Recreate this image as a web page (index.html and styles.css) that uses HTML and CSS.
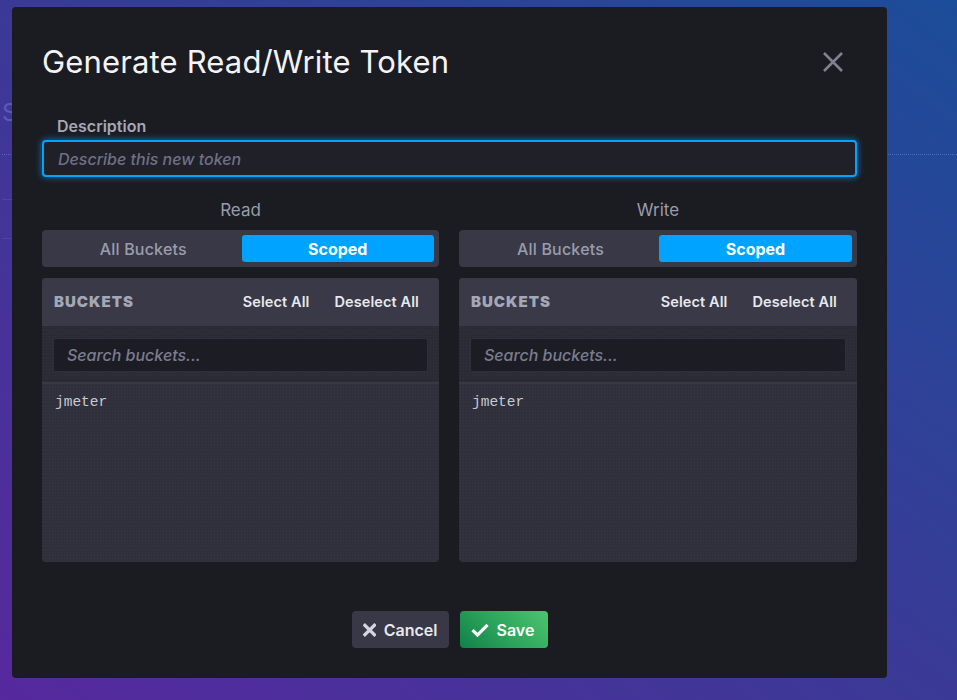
FILE: index.html
```html
<!DOCTYPE html>
<html lang="en">
<head>
<meta charset="utf-8">
<title>Generate Read/Write Token</title>
<link rel="stylesheet" href="styles.css">
</head>
<body>
<div class="page">
  <div class="page-title">S</div>
  <div class="page-rule"></div>
  <div class="page-box"></div>
</div>
<div class="overlay">
  <div class="modal">
    <div class="modal-header">
      <h1 class="modal-title">Generate Read/Write Token</h1>
      <button class="close-btn" type="button" aria-label="Close">
        <svg width="20" height="20" viewBox="0 0 20 20"><path d="M1 1L19 19M19 1L1 19" stroke="#7f8191" stroke-width="2.6" stroke-linecap="butt" fill="none"/></svg>
      </button>
    </div>
    <div class="field">
      <label class="field-label">Description</label>
      <input class="desc-input" type="text" placeholder="Describe this new token">
    </div>
    <div class="columns">
      <div class="col">
        <div class="col-title">Read</div>
        <div class="toggle">
          <div class="toggle-opt">All Buckets</div>
          <div class="toggle-opt active">Scoped</div>
        </div>
        <div class="panel">
          <div class="panel-head">
            <span class="panel-label">BUCKETS</span>
            <div class="panel-actions">
              <span class="panel-link">Select All</span>
              <span class="panel-link">Deselect All</span>
            </div>
          </div>
          <div class="panel-search">
            <input class="search-input" type="text" placeholder="Search buckets...">
          </div>
          <div class="panel-list">
            <div class="bucket">jmeter</div>
          </div>
        </div>
      </div>
      <div class="col">
        <div class="col-title">Write</div>
        <div class="toggle">
          <div class="toggle-opt">All Buckets</div>
          <div class="toggle-opt active">Scoped</div>
        </div>
        <div class="panel">
          <div class="panel-head">
            <span class="panel-label">BUCKETS</span>
            <div class="panel-actions">
              <span class="panel-link">Select All</span>
              <span class="panel-link">Deselect All</span>
            </div>
          </div>
          <div class="panel-search">
            <input class="search-input" type="text" placeholder="Search buckets...">
          </div>
          <div class="panel-list">
            <div class="bucket">jmeter</div>
          </div>
        </div>
      </div>
    </div>
    <div class="footer">
      <button class="btn btn-cancel" type="button">
        <svg width="14" height="14" viewBox="0 0 14 14"><path d="M0.8 0.8L13.2 13.2M13.2 0.8L0.8 13.2" stroke="#d4d7dd" stroke-width="3.4" fill="none"/></svg>
        <span>Cancel</span>
      </button>
      <button class="btn btn-save" type="button">
        <svg width="18" height="14" viewBox="0 0 18 14"><path d="M1.5 7.2L6.5 12L16.5 1.8" stroke="#ffffff" stroke-width="3.2" fill="none" stroke-linejoin="miter"/></svg>
        <span>Save</span>
      </button>
    </div>
  </div>
</div>
</body>
</html>
```
FILE: styles.css
```css
* { box-sizing: border-box; }

html, body {
  margin: 0;
  height: 100%;
}

body {
  font-family: "Inter", "Noto Sans", sans-serif;
  background: linear-gradient(to top right, #56299e 0%, #3a3a96 50%, #1c4d99 100%);
  overflow: hidden;
}

.page {
  padding: 98px 0 0 2px;
}

.page-title {
  display: inline-block;
  color: rgba(150, 160, 230, 0.35);
  font-size: 24px;
  line-height: 30px;
}

.page-rule {
  margin-top: 26px;
  height: 1px;
  border-top: 1px dotted rgba(120, 150, 230, 0.45);
}

.page-box {
  margin-top: 44px;
  height: 40px;
  width: 40px;
  border-top: 1px solid rgba(150, 150, 220, 0.15);
  border-bottom: 1px solid rgba(150, 150, 220, 0.15);
}

.overlay {
  position: fixed;
  inset: 0;
  padding: 7px 0 0 12px;
}

.modal {
  width: 875px;
  height: 671px;
  background: #1b1b22;
  border-radius: 4px;
  padding: 37px 30px 0 30px;
  display: flex;
  flex-direction: column;
}

.modal-header {
  display: flex;
  align-items: center;
  justify-content: space-between;
}

.modal-title {
  margin: 0;
  font-size: 31px;
  line-height: 36px;
  font-weight: 400;
  color: #f4f4f7;
  letter-spacing: 0.15px;
}

.close-btn {
  background: none;
  border: none;
  padding: 0;
  margin-right: 14px;
  width: 20px;
  height: 20px;
  display: flex;
}

.field {
  margin-top: 37px;
  display: flex;
  flex-direction: column;
}

.field-label {
  font-size: 16px;
  line-height: 18px;
  font-weight: 600;
  color: #a4a8b6;
  padding-left: 15px;
  margin-bottom: 5px;
}

.desc-input {
  height: 37px;
  flex: 0 0 37px;
  border: 2px solid #00a3ff;
  border-radius: 4px;
  background: #202029;
  box-shadow: 0 0 6px 1px rgba(0, 163, 255, 0.55);
  padding: 0 14px;
  font-family: inherit;
  font-size: 16px;
  font-weight: 500;
  color: #e7e8eb;
  outline: none;
}

.desc-input::placeholder {
  font-style: italic;
  color: #6e7183;
}

.columns {
  margin-top: 22px;
  display: grid;
  grid-template-columns: 397px 398px;
  column-gap: 20px;
}

.col {
  display: flex;
  flex-direction: column;
}

.col-title {
  text-align: center;
  font-size: 17px;
  line-height: 22px;
  color: #999dab;
  margin-bottom: 9px;
}

.toggle {
  height: 37px;
  flex: 0 0 37px;
  background: #383846;
  border-radius: 4px;
  padding: 5px;
  display: grid;
  grid-template-columns: 1fr 1fr;
  column-gap: 2px;
}

.toggle-opt {
  display: flex;
  align-items: center;
  justify-content: center;
  font-size: 16px;
  font-weight: 500;
  letter-spacing: 0.2px;
  color: #999dab;
  border-radius: 3px;
}

.toggle-opt.active {
  background: #00a3ff;
  color: #ffffff;
  font-weight: 700;
  letter-spacing: 0;
}

.panel {
  margin-top: 11px;
  height: 284px;
  flex: 0 0 284px;
  border-radius: 4px;
  overflow: hidden;
  display: flex;
  flex-direction: column;
  background-color: #30303c;
  background-image: radial-gradient(rgba(255, 255, 255, 0.035) 0.8px, transparent 0.9px);
  background-size: 3px 3px;
}

.panel-head {
  height: 48px;
  flex: 0 0 48px;
  background: #393947;
  display: flex;
  align-items: center;
  justify-content: space-between;
  padding: 0 20px 0 12px;
}

.panel-label {
  font-size: 15px;
  font-weight: 900;
  color: #a4a8b6;
  letter-spacing: 1px;
  margin-top: -2px;
}

.panel-actions {
  display: flex;
  gap: 25px;
  margin-top: -2px;
}

.panel-link {
  font-size: 14.5px;
  font-weight: 600;
  color: #e7e8eb;
  letter-spacing: 0.1px;
}

.panel-search {
  height: 58px;
  flex: 0 0 58px;
  padding: 12px 11px;
  background-color: #2b2b36;
  background-image: radial-gradient(rgba(255, 255, 255, 0.035) 0.8px, transparent 0.9px);
  background-size: 3px 3px;
  border-bottom: 2px solid #383846;
}

.search-input {
  width: 100%;
  height: 34px;
  background: #1c1c24;
  border: 1px solid #2f2f3a;
  border-radius: 3px;
  padding: 0 13px;
  font-family: inherit;
  font-size: 16px;
  font-weight: 500;
  color: #e7e8eb;
  outline: none;
}

.search-input::placeholder {
  font-style: italic;
  color: #7a7d8f;
}

.panel-list {
  flex: 1;
  padding: 10px 13px;
}

.bucket {
  font-family: "Liberation Mono", "Courier New", monospace;
  font-size: 14.5px;
  line-height: 16px;
  color: #c6cad3;
}

.footer {
  margin-top: 49px;
  display: flex;
  justify-content: center;
  gap: 11px;
}

.btn {
  height: 37px;
  border: none;
  border-radius: 4px;
  display: flex;
  align-items: center;
  gap: 8px;
  font-family: inherit;
  font-size: 16px;
  font-weight: 600;
  padding: 0 11px;
}

.btn-cancel {
  width: 97px;
  background: #383846;
  color: #e7e8eb;
}

.btn-save {
  width: 88px;
  background: linear-gradient(45deg, #11804a 0%, #2ba35a 45%, #4cc46f 100%);
  color: #ffffff;
}
```
